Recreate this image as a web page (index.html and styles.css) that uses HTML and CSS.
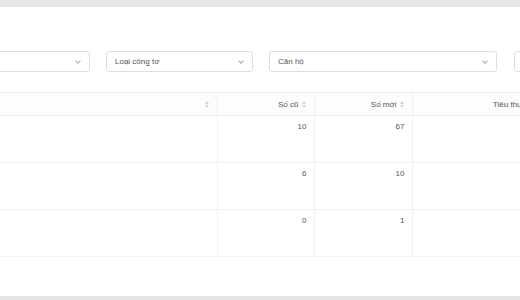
FILE: index.html
```html
<!DOCTYPE html>
<html>
<head>
  <title>Chỉ số công tơ</title>
  <link rel="stylesheet" href="styles.css">
</head>
<body>
  <div class="panel">
    <div class="filters">
      <div class="select w1"><span>Đã duyệt</span><i class="chev"></i></div>
      <div class="select w2"><span>Loại công tơ</span><i class="chev"></i></div>
      <div class="select w3"><span>Căn hộ</span><i class="chev"></i></div>
      <div class="select w4"><span></span></div>
    </div>

    <table class="meter-table">
      <thead>
        <tr>
          <th class="c1"><span class="sort"></span></th>
          <th class="c2">Số cũ<span class="sort"></span></th>
          <th class="c3">Số mới<span class="sort"></span></th>
          <th class="c4">Tiêu thụ<span class="sort"></span></th>
        </tr>
      </thead>
      <tbody>
        <tr><td></td><td>10</td><td>67</td><td>57</td></tr>
        <tr><td></td><td>6</td><td>10</td><td>4</td></tr>
        <tr><td></td><td>0</td><td>1</td><td>1</td></tr>
      </tbody>
    </table>
  </div>
</body>
</html>
```
FILE: styles.css
```css
body {
  margin: 0;
  background-color: #e6e6e6;
  font-family: "Liberation Sans", Arial, sans-serif;
  font-size: 8px;
  color: #555;
  overflow: hidden;
  height: 300px;
}

.panel {
  background-color: #fff;
  margin-top: 7px;
  margin-left: -60px;
  width: 720px;
  height: 245px;
  padding-top: 44px;
}

.filters {
  display: flex;
  gap: 16px;
}

.select {
  border: 1px solid #dedede;
  border-radius: 3px;
  display: flex;
  align-items: center;
  justify-content: space-between;
  padding: 0 9px 0 8px;
  box-sizing: border-box;
  height: 21px;
  flex-shrink: 0;
}

.w1 { width: 150px; }
.w2 { width: 147px; }
.w3 { width: 228px; }
.w4 { width: 80px; margin-left: 1px; }

.chev {
  width: 3px;
  height: 3px;
  border-right: 1px solid #aaa;
  border-bottom: 1px solid #aaa;
  transform: rotate(45deg);
  margin-top: -2px;
}

.meter-table {
  margin-top: 20px;
  border-collapse: collapse;
  table-layout: fixed;
  width: 597px;
}

.meter-table th,
.meter-table td {
  box-sizing: border-box;
  border-top: 1px solid #f0f0f2;
  border-right: 1px solid #f0f0f2;
  text-align: right;
  padding: 0 7px;
  font-weight: normal;
}

.meter-table th {
  height: 23px;
  background-color: #fdfdfd;
}

.meter-table td {
  height: 47px;
  vertical-align: top;
  padding-top: 6px;
}

.meter-table tbody tr:last-child td {
  border-bottom: 1px solid #f0f0f2;
}

.meter-table .c1 { width: 277px; }
.meter-table .c2 { width: 97px; }
.meter-table .c3 { width: 98px; }
.meter-table .c4 { width: 125px; }

.sort {
  display: inline-block;
  vertical-align: middle;
  margin-left: 3px;
  width: 5px;
  height: 7px;
  position: relative;
}

.sort::before,
.sort::after {
  content: "";
  position: absolute;
  left: 0;
  border-left: 2.5px solid transparent;
  border-right: 2.5px solid transparent;
}

.sort::before {
  top: 0;
  border-bottom: 3px solid #d4d4d8;
}

.sort::after {
  bottom: 0;
  border-top: 3px solid #d4d4d8;
}
```
